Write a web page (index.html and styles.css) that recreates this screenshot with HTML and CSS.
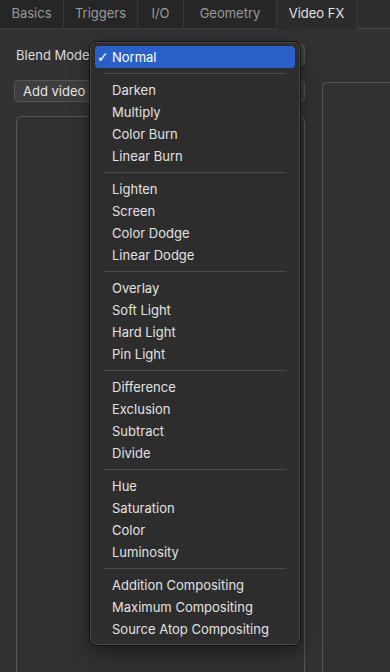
FILE: index.html
```html
<!DOCTYPE html>
<html>

<head>
    <meta charset="UTF-8">
    <title>Video FX</title>
    <link rel="stylesheet" href="styles.css">
</head>

<body>
    <div class="tabs">
        <div class="tab basics">Basics</div>
        <div class="tab triggers">Triggers</div>
        <div class="tab io">I/O</div>
        <div class="tab geometry">Geometry</div>
        <div class="tab videofx selected">Video FX</div>
        <div class="tabFill"></div>
    </div>

    <div class="content">
        <div class="blendRow">
            <span class="label">Blend Mode</span>
            <div class="select"></div>
        </div>
        <div class="columns">
            <div class="leftCol">
                <div class="addButton">Add video effect</div>
                <div class="panel leftPanel"></div>
            </div>
            <div class="panel rightPanel"></div>
        </div>
    </div>

    <div class="menu">
        <div class="item active"><span class="check">✓</span>Normal</div>
        <div class="sep"></div>
        <div class="item">Darken</div>
        <div class="item">Multiply</div>
        <div class="item">Color Burn</div>
        <div class="item">Linear Burn</div>
        <div class="sep"></div>
        <div class="item">Lighten</div>
        <div class="item">Screen</div>
        <div class="item">Color Dodge</div>
        <div class="item">Linear Dodge</div>
        <div class="sep"></div>
        <div class="item">Overlay</div>
        <div class="item">Soft Light</div>
        <div class="item">Hard Light</div>
        <div class="item">Pin Light</div>
        <div class="sep"></div>
        <div class="item">Difference</div>
        <div class="item">Exclusion</div>
        <div class="item">Subtract</div>
        <div class="item">Divide</div>
        <div class="sep"></div>
        <div class="item">Hue</div>
        <div class="item">Saturation</div>
        <div class="item">Color</div>
        <div class="item">Luminosity</div>
        <div class="sep"></div>
        <div class="item">Addition Compositing</div>
        <div class="item">Maximum Compositing</div>
        <div class="item">Source Atop Compositing</div>
    </div>
</body>
</html>
```

FILE: styles.css
```css
* {
    box-sizing: border-box;
    font-family: 'Inter', 'Liberation Sans', sans-serif;
}
html, body {
    height: 100%;
}
body {
    margin: 0;
    overflow: hidden;
    background: #323232;
    color: #dedede;
    font-size: 13px;
}
.tabs {
    display: flex;
    height: 29px;
    background: #262626;
}
.tab {
    height: 29px;
    line-height: 27px;
    text-align: center;
    color: #9a9a9a;
    border-right: 1px solid #3a3a3a;
    border-bottom: 1px solid #3c3c3c;
}
.basics {
    width: 64px;
}
.triggers {
    width: 74px;
}
.io {
    width: 46px;
}
.geometry {
    width: 93px;
}
.videofx {
    width: 80px;
}
.tab.selected {
    background: #2b2b2b;
    color: #e4e4e4;
    border-bottom: 1px solid #2b2b2b;
}
.tabFill {
    flex: 1;
    background: #2e2e2e;
    border-bottom: 1px solid #4a4a4a;
}
.content {
    padding: 15px 0 0 14px;
    height: calc(100% - 29px);
    display: flex;
    flex-direction: column;
    overflow: hidden;
}
.blendRow {
    display: flex;
    align-items: center;
    gap: 6px;
    height: 22px;
    width: 291px;
}
.label {
    padding-left: 2px;
    color: #dcdcdc;
}
.select {
    flex: 1;
    height: 22px;
    border-radius: 4px;
    background: #444;
    border: 1px solid #555;
}
.columns {
    display: flex;
    gap: 17px;
    flex: 1;
    margin-top: 14px;
}
.leftCol {
    width: 291px;
    flex-shrink: 0;
    display: flex;
    flex-direction: column;
}
.addButton {
    height: 22px;
    line-height: 20px;
    padding-left: 8px;
    background: #3e3e3e;
    border: 1px solid #555;
    border-radius: 4px;
    color: #e6e6e6;
    white-space: nowrap;
    overflow: hidden;
}
.panel {
    border: 1px solid #575757;
    border-bottom: none;
    border-radius: 6px 6px 0 0;
    background: #313131;
}
.leftPanel {
    flex: 1;
    margin: 14px 0 0 2px;
}
.rightPanel {
    flex: 1;
    margin-top: 2px;
    border-right: none;
    border-radius: 6px 0 0 0;
}
.menu {
    position: absolute;
    left: 89px;
    top: 41px;
    width: 212px;
    padding: 4px 5px 5px;
    background: #2d2d2d;
    border: 1px solid #111;
    border-radius: 7px;
    box-shadow: inset 0 0 0 1px #474747, 0 6px 18px rgba(0, 0, 0, 0.45);
}
.item {
    height: 22px;
    line-height: 22px;
    padding-left: 17px;
    border-radius: 4px;
    color: #e2e2e2;
    white-space: nowrap;
}
.item.active {
    background: #2a5fc8;
    color: #fff;
    padding-left: 2px;
}
.check {
    display: inline-block;
    width: 15px;
    font-family: 'DejaVu Sans', sans-serif;
    font-size: 14px;
}
.sep {
    height: 1px;
    margin: 5px 9px;
    background: #4b4b4b;
}
```
